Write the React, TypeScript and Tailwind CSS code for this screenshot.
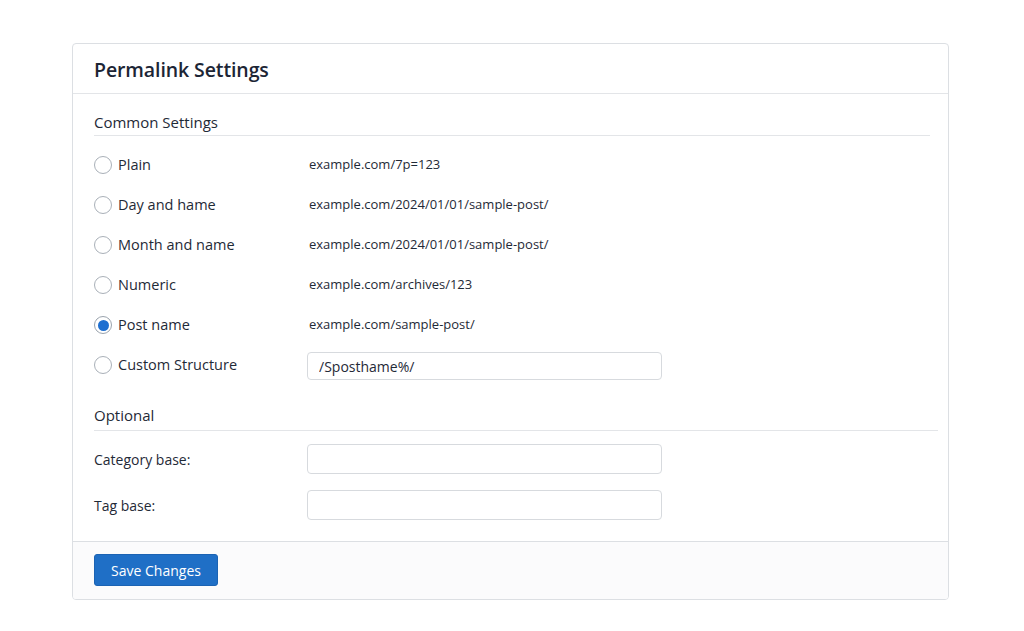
import React, { useState } from "react";

type Option = {
  id: string;
  label: string;
  example?: string;
  custom?: boolean;
};

const options: Option[] = [
  { id: "plain", label: "Plain", example: "example.com/7p=123" },
  { id: "day", label: "Day and hame", example: "example.com/2024/01/01/sample-post/" },
  { id: "month", label: "Month and name", example: "example.com/2024/01/01/sample-post/" },
  { id: "numeric", label: "Numeric", example: "example.com/archives/123" },
  { id: "post", label: "Post name", example: "example.com/sample-post/" },
  { id: "custom", label: "Custom Structure", custom: true },
];

const Radio = ({ checked }: { checked: boolean }) => (
  <span
    className={
      "flex items-center justify-center w-[18px] h-[18px] rounded-full border bg-white " +
      (checked ? "border-[#9aa3ad]" : "border-[#a9b0b8]")
    }
  >
    {checked && <span className="w-[11px] h-[11px] rounded-full bg-[#1e6fd0]" />}
  </span>
);

const App = () => {
  const [selected, setSelected] = useState("post");
  const [structure, setStructure] = useState("/Sposthame%/");

  return (
    <div
      className="min-h-[631px] bg-white pt-[43px]"
      style={{ fontFamily: '"Open Sans", "Noto Sans", sans-serif' }}
    >
      <div className="ml-[72px] w-[877px] border border-[#dcdfe3] rounded-[4px] overflow-hidden text-[#1f2a37]">
        {/* Header */}
        <div className="h-[50px] px-[21px] pt-[3px] flex items-center border-b border-[#e3e5e8]">
          <h1 className="text-[19.5px] font-semibold text-[#1c2535] tracking-[-0.1px]">
            Permalink Settings
          </h1>
        </div>

        {/* Common settings */}
        <div className="pl-[21px] pr-[18px] pt-[18px]">
          <div className="pb-[3px] border-b border-[#e3e5e8] text-[15px] font-medium leading-[20px]">
            Common Settings
          </div>
          <div className="pt-[9px]">
            {options.map((opt) => (
              <div key={opt.id} className="h-10 flex items-center">
                <label
                  className="w-[213px] flex items-center gap-[6px] cursor-pointer"
                  onClick={() => setSelected(opt.id)}
                >
                  <Radio checked={selected === opt.id} />
                  <span className="text-[14.5px] font-medium text-[#1f2a37]">{opt.label}</span>
                </label>
                {opt.custom ? (
                  <input
                    value={structure}
                    onChange={(e) => setStructure(e.target.value)}
                    className="mt-[2px] w-[355px] h-[28px] px-[11px] text-[14px] border border-[#d7dade] rounded-[4px] outline-none"
                  />
                ) : (
                  <span className="pl-[2px] text-[13px] text-[#1f2a37]">{opt.example}</span>
                )}
              </div>
            ))}
          </div>
        </div>

        {/* Optional */}
        <div className="pl-[21px] pr-[10px] pt-[20px] pb-[21px]">
          <div className="pb-[5px] border-b border-[#e3e5e8] text-[15px] font-medium leading-[20px]">
            Optional
          </div>
          <div className="pt-[13px] flex flex-col gap-[16px]">
            <div className="h-[30px] flex items-center">
              <span className="w-[213px] text-[14px] font-medium">Category base:</span>
              <input className="w-[355px] h-[30px] px-[11px] text-[14px] border border-[#d7dade] rounded-[4px] outline-none" />
            </div>
            <div className="h-[30px] flex items-center">
              <span className="w-[213px] text-[14px] font-medium">Tag base:</span>
              <input className="w-[355px] h-[30px] px-[11px] text-[14px] border border-[#d7dade] rounded-[4px] outline-none" />
            </div>
          </div>
        </div>

        {/* Footer */}
        <div className="border-t border-[#dcdfe3] bg-[#fbfbfc] px-[21px] pt-[12px] pb-[13px]">
          <button className="h-[32px] w-[124px] rounded-[3px] bg-[#1f6fc6] border border-[#1b63b3] text-white text-[14px] font-medium">
            Save Changes
          </button>
        </div>
      </div>
    </div>
  );
};

export default App;
